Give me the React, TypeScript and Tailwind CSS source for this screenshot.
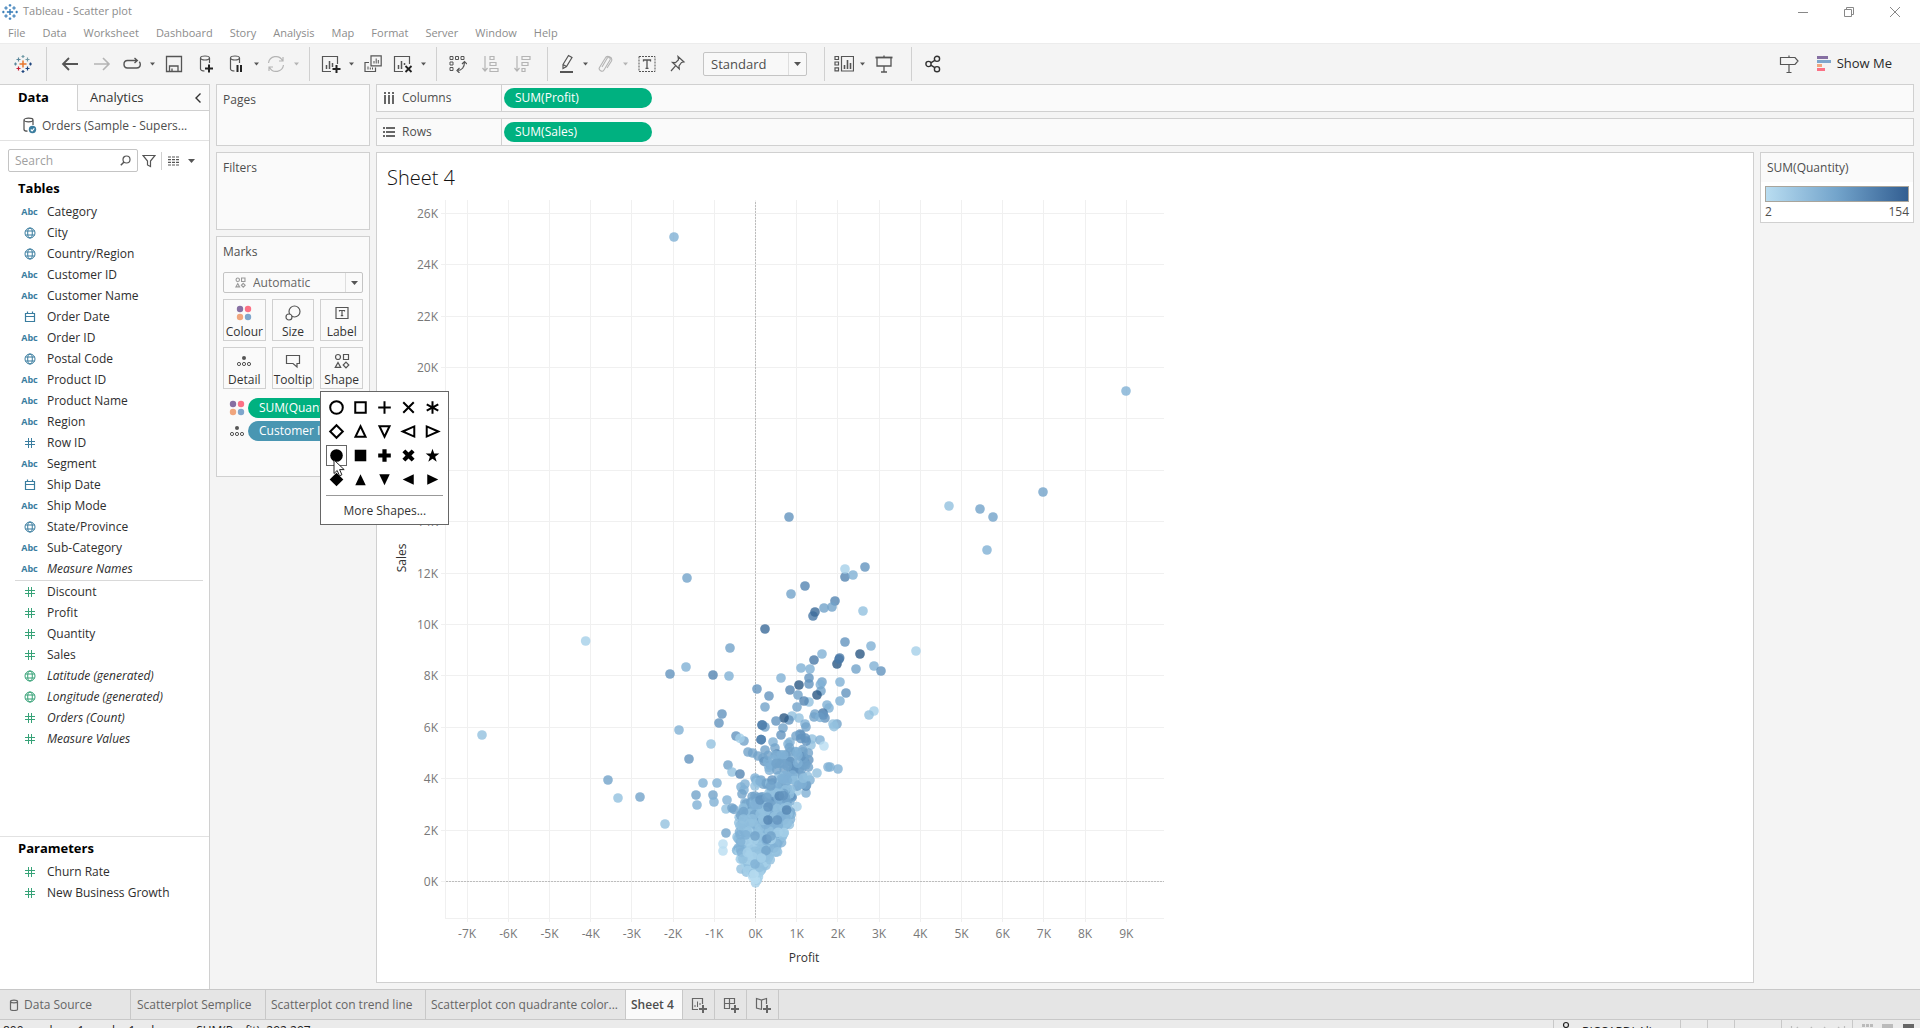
import type { ReactNode } from 'react';

type FieldKind = 'abc' | 'geo' | 'date' | 'num';
type Field = { name: string; kind: FieldKind; italic?: boolean };

const MENU = ['File', 'Data', 'Worksheet', 'Dashboard', 'Story', 'Analysis', 'Map', 'Format', 'Server', 'Window', 'Help'];

const DIMENSIONS: Field[] = [
  { name: 'Category', kind: 'abc' },
  { name: 'City', kind: 'geo' },
  { name: 'Country/Region', kind: 'geo' },
  { name: 'Customer ID', kind: 'abc' },
  { name: 'Customer Name', kind: 'abc' },
  { name: 'Order Date', kind: 'date' },
  { name: 'Order ID', kind: 'abc' },
  { name: 'Postal Code', kind: 'geo' },
  { name: 'Product ID', kind: 'abc' },
  { name: 'Product Name', kind: 'abc' },
  { name: 'Region', kind: 'abc' },
  { name: 'Row ID', kind: 'num' },
  { name: 'Segment', kind: 'abc' },
  { name: 'Ship Date', kind: 'date' },
  { name: 'Ship Mode', kind: 'abc' },
  { name: 'State/Province', kind: 'geo' },
  { name: 'Sub-Category', kind: 'abc' },
  { name: 'Measure Names', kind: 'abc', italic: true },
];

const MEASURES: Field[] = [
  { name: 'Discount', kind: 'num' },
  { name: 'Profit', kind: 'num' },
  { name: 'Quantity', kind: 'num' },
  { name: 'Sales', kind: 'num' },
  { name: 'Latitude (generated)', kind: 'geo', italic: true },
  { name: 'Longitude (generated)', kind: 'geo', italic: true },
  { name: 'Orders (Count)', kind: 'num', italic: true },
  { name: 'Measure Values', kind: 'num', italic: true },
];

const PARAMETERS: Field[] = [
  { name: 'Churn Rate', kind: 'num' },
  { name: 'New Business Growth', kind: 'num' },
];

/* ---------- icons ---------- */

function Svg({ w = 18, h = 18, children, className = '' }: { w?: number; h?: number; children: ReactNode; className?: string }) {
  return (
    <svg width={w} height={h} viewBox={`0 0 ${w} ${h}`} fill="none" stroke="currentColor" strokeWidth="1.2" className={`shrink-0 ${className}`} aria-hidden="true">
      {children}
    </svg>
  );
}

const Caret = ({ className = '' }: { className?: string }) => (
  <svg width="7" height="4" viewBox="0 0 7 4" fill="currentColor" className={className} aria-hidden="true">
    <path d="M0 0h7L3.500 4z" />
  </svg>
);

function Logo({ mono = false }: { mono?: boolean }) {
  const c = mono ? ['#2f77b5', '#2f77b5', '#2f77b5', '#2f77b5', '#2f77b5'] : ['#e8762c', '#c72037', '#5b879b', '#1f457e', '#7099a5'];
  return (
    <Svg className={mono ? 'size-4' : ''}>
      <path d="M9 5.500v7M5.500 9h7" stroke={c[0]} strokeWidth="1.500" />
      <path d="M4.500 2.500v4M2.500 4.500h4" stroke={c[2]} />
      <path d="M13.500 2.500v4M11.500 4.500h4" stroke={c[4]} />
      <path d="M4.500 11.500v4M2.500 13.500h4" stroke={c[1]} />
      <path d="M13.500 11.500v4M11.500 13.500h4" stroke={c[3]} />
      <path d="M9 0v3M7.500 1.500h3" stroke={c[4]} />
      <path d="M9 15v3M7.500 16.500h3" stroke={c[3]} />
      <path d="M1.500 7.500v3M0 9h3" stroke={c[2]} />
      <path d="M16.500 7.500v3M15 9h3" stroke={c[3]} />
    </Svg>
  );
}

const Globe = () => (
  <Svg w={12} h={12}>
    <circle cx="6" cy="6" r="5" strokeWidth="1" />
    <ellipse cx="6" cy="6" rx="2.300" ry="5" strokeWidth="1" />
    <path d="M1.500 4h9M1.500 8h9" strokeWidth="1" />
  </Svg>
);

const Calendar = () => (
  <Svg w={12} h={12}>
    <path d="M1.500 2.500h9v8h-9zM1.500 5.500h9M3.500 .5v2M8.500 .5v2" />
  </Svg>
);

const Hash = () => (
  <Svg w={12} h={12}>
    <path d="M4.500 1v10M7.500 1v10M1 4.500h10M1 7.500h10" strokeWidth="1" />
  </Svg>
);

const FourDots = () => (
  <svg width="16" height="16" viewBox="0 0 16 16" className="shrink-0" aria-hidden="true">
    <circle cx="4" cy="4" r="3.200" fill="#866fa2" />
    <circle cx="12" cy="4" r="3.200" fill="#fb7185" />
    <circle cx="4" cy="12" r="3.200" fill="#f0a67e" />
    <circle cx="12" cy="12" r="3.200" fill="#7ea6cc" />
  </svg>
);

const DetailIcon = () => (
  <Svg w={16} h={16} className="text-[#555]">
    <circle cx="8" cy="5" r="2" fill="currentColor" stroke="none" />
    <circle cx="3" cy="11" r="1.600" strokeWidth="1" />
    <circle cx="8" cy="11" r="1.600" strokeWidth="1" />
    <circle cx="13" cy="11" r="1.600" strokeWidth="1" />
  </Svg>
);

const ShapesIcon = () => (
  <Svg w={16} h={16}>
    <circle cx="4" cy="4" r="2.500" />
    <path d="M9.500 1.500h5v5h-5zM1.300 14.400L4 9.500l2.700 4.900zM12 9.200l2.800 2.800-2.800 2.800L9.200 12z" />
  </Svg>
);

const SizeIcon = () => (
  <Svg w={16} h={16}>
    <circle cx="9.500" cy="6.500" r="5.500" />
    <circle cx="4" cy="12" r="3" fill="#fafafa" />
  </Svg>
);

const LabelIcon = () => (
  <Svg w={16} h={16}>
    <path d="M2 2.500h12v11H2z" />
    <path d="M5.500 6.500v-1h5v1M8 5.500v5M6.800 10.700h2.400" />
  </Svg>
);

const TooltipIcon = () => (
  <Svg w={16} h={16}>
    <path d="M1.500 2.500h13v8h-2.500v3.500l-4-3.500H1.500z" />
  </Svg>
);

function Cylinder({ children }: { children?: ReactNode }) {
  return (
    <Svg w={18} h={20}>
      <path d="M3.500 4v11c0 1 2 2 4 2M12.500 4v5" />
      <ellipse cx="8" cy="4" rx="4.500" ry="2" />
      {children}
    </Svg>
  );
}

/* ---------- toolbar ---------- */

const TOOL_WIDTH = { sm: 'w-6', md: 'w-7', lg: 'w-8' };

function Tool({ label, size = 'md', dim, children }: { label: string; size?: 'sm' | 'md' | 'lg'; dim?: boolean; children: ReactNode }) {
  return (
    <button aria-label={label} className={`flex h-8 shrink-0 items-center justify-center ${TOOL_WIDTH[size]} ${dim ? 'text-[#b4b4b4]' : 'text-[#555]'}`}>
      {children}
    </button>
  );
}

function CaretTool({ label, dim }: { label: string; dim?: boolean }) {
  return (
    <button aria-label={label} className={`flex h-8 w-3 shrink-0 items-center justify-center ${dim ? 'text-[#b4b4b4]' : 'text-[#555]'}`}>
      <Caret className="w-[5px]" />
    </button>
  );
}

const Sep = () => <div className="mx-[7px] h-[34px] w-px shrink-0 bg-[#d0d0d0]" />;

function Toolbar() {
  return (
    <div className="flex h-[41px] shrink-0 items-center border-t border-[#ececec] bg-[#f4f4f4] pl-[7px]">
      <Tool label="Start page" size="lg"><Logo /></Tool>
      <Sep />
      <Tool label="Undo" size="lg"><Svg><path d="M17 9H2M8 3L2 9l6 6" strokeWidth="1.800" /></Svg></Tool>
      <Tool label="Redo" size="lg" dim><Svg><path d="M1 9h15M10 3l6 6-6 6" strokeWidth="1.600" /></Svg></Tool>
      <Tool label="Replay"><Svg><path d="M7 13H4.500C2.500 13 1 11.500 1 9.300S2.500 5.500 4.500 5.500H14M11.500 3l2.800 2.500L11.500 8M7 13h6.500c2.200 0 3.800-1.500 3.800-3.700 0-1-.4-1.900-1-2.600" strokeWidth="1.400" /></Svg></Tool>
      <CaretTool label="Replay options" />
      <Tool label="Save" size="lg"><Svg><path d="M1.500 1.500h15v15h-15zM4.500 16.500V11h8.500v5.500M7 16.500V13.500" strokeWidth="1.300" /></Svg></Tool>
      <Tool label="New data source" size="lg">
        <Cylinder><path d="M12 10.500v8M8 14.500h8" stroke="#222" strokeWidth="2" /></Cylinder>
      </Tool>
      <Tool label="Pause auto updates">
        <Cylinder><path d="M10.500 11v7M14 11v7" stroke="#222" strokeWidth="2" /></Cylinder>
      </Tool>
      <CaretTool label="Pause options" />
      <Tool label="Refresh" dim><Svg><path d="M1.500 8A7.500 7.500 0 0 1 15.500 5.500M16.500 10A7.500 7.500 0 0 1 2.500 12.500M16 2v4h-4M2 16v-4h4" /></Svg></Tool>
      <CaretTool label="Refresh options" dim />
      <Sep />
      <Tool label="New worksheet">
        <Svg w={20} h={18}>
          <path d="M10 16.500H1.500v-15h15V9" />
          <path d="M5.500 14V10M8.500 14V6M11.500 12V8" strokeWidth="1.500" />
          <path d="M15.500 10v8M11.500 14h8" stroke="#222" strokeWidth="2" />
        </Svg>
      </Tool>
      <CaretTool label="New options" />
      <Tool label="Duplicate" size="lg">
        <Svg>
          <path d="M7 .8h10.200v10H7zM5 7.500H1v9h10.500v-4" />
          <path d="M10 8.500V6M12.200 8.500V3.500M14.300 8.500V5M4 14.500v-3M6.300 14.500v-2M8.500 14.500v-2" strokeWidth="1" />
        </Svg>
      </Tool>
      <Tool label="Clear sheet">
        <Svg w={20} h={18}>
          <path d="M10 16.500H1.500v-15h15V9" />
          <path d="M5.500 14V10M8.500 14V6M11.500 10V8" strokeWidth="1.500" />
          <path d="M12.500 11l6 6M18.500 11l-6 6" stroke="#222" strokeWidth="1.800" />
        </Svg>
      </Tool>
      <CaretTool label="Clear options" />
      <Sep />
      <Tool label="Swap rows and columns" size="md">
        <Svg>
          <path d="M1 1.500h3v3H1zM6.500 1.500h3v3h-3zM12 1.500h3v3h-3zM1 7h3v3H1zM1 12.500h3v3H1z" strokeWidth="1" />
          <path d="M15.500 7c0 5-2.500 8.500-7.500 8.500M13 9l2.500-2.500L18 9M10.500 13L8 15.500l2.500 2.500" />
        </Svg>
      </Tool>
      <div className="w-0.5" />
      <Tool label="Sort ascending" size="lg" dim><Svg><path d="M4 1v15M1.500 13L4 16l2.500-3M9 1.500h4v3H9zM9 7.500h6v3H9zM9 13.500h8v3H9z" /></Svg></Tool>
      <Tool label="Sort descending" size="lg" dim><Svg><path d="M4 1v15M1.500 13L4 16l2.500-3M9 1.500h8v3H9zM9 7.500h6v3H9zM9 13.500h3v3H9z" /></Svg></Tool>
      <div className="w-0.5" />
      <Sep />
      <Tool label="Highlight" size="sm">
        <Svg w={16} h={20}>
          <path d="M4 10.500L9.500 1.500l3.500 2-5.500 9L4 14.500zM4 10.500l3.500 2" />
          <path d="M1 18h13" strokeWidth="2" />
        </Svg>
      </Tool>
      <CaretTool label="Highlight options" />
      <Tool label="Group members" dim><Svg><path d="M6 12l5-8.500c1.300-2 4-.5 3 1.500L8 15c-1.600 2.600-6 .3-4.500-2.500L9 3.500C11-.5 17 2 15.500 6L11 13" strokeWidth="1.100" /></Svg></Tool>
      <CaretTool label="Group options" dim />
      <Tool label="Show mark labels" size="lg">
        <Svg>
          <path d="M1 1.500h16v15H1z" strokeDasharray="2 1" strokeWidth="1" />
          <path d="M5.500 6.500V5h7v1.500M9 5v8M7.500 13.300h3" strokeWidth="1.300" />
        </Svg>
      </Tool>
      <Tool label="Fix axes"><Svg><path d="M10 1.500l6 5.500-2.500.5-2.500 3.500.3 3L4.500 7.500l3 .2 3-3zM7.500 10.800L3 16" /></Svg></Tool>
      <div className="relative mr-2.5 ml-3 w-[104px] shrink-0">
        <select aria-label="Fit" className="block h-6 w-full appearance-none rounded-xs border border-[#c4c4c4] bg-[#f8f8f8] pl-[7px] text-[13px] leading-5 text-[#4e4e4e]">
          <option>Standard</option>
          <option>Entire View</option>
        </select>
        <div className="pointer-events-none absolute inset-y-px right-px flex w-[18px] items-center justify-center border-l border-[#dedede] text-[#555]">
          <Caret />
        </div>
      </div>
      <Sep />
      <Tool label="Show cards" size="sm">
        <Svg w={20} h={18}>
          <path d="M7.500 1.500h12v14.500h-12zM1 1.500h3.500v3H1zM1 7h3.500v3H1zM1 12.800h3.500v3H1z" />
          <path d="M10.500 14v-4M13.500 14V5M16.500 14V8" strokeWidth="1.600" />
        </Svg>
      </Tool>
      <CaretTool label="Card options" />
      <Tool label="Presentation mode" size="lg">
        <Svg><path d="M.5 2.500h17" strokeWidth="1.800" /><path d="M2 2.500v8.500h14V2.500M9 .5V2M9 11v6M6 17h6" strokeWidth="1.300" /></Svg>
      </Tool>
      <div className="w-1" />
      <Sep />
      <Tool label="Share">
        <Svg w={16} h={18} className="text-[#333]">
          <circle cx="3.500" cy="9" r="2.600" strokeWidth="1.400" />
          <circle cx="12" cy="3.800" r="2.600" strokeWidth="1.400" />
          <circle cx="12" cy="14.200" r="2.600" strokeWidth="1.400" />
          <path d="M5.800 7.800l4-2.500M5.800 10.200l4 2.500" strokeWidth="1.400" />
        </Svg>
      </Tool>
      <div className="ml-auto flex items-center pr-7">
        <Tool label="Data guide">
          <Svg w={20} h={18}><path d="M1.500 2.500h14.500l3 3.500-3 3.500H1.500zM10 .5v2M10 9.500v8M7.500 17.500h5" /></Svg>
        </Tool>
        <button className="ml-3.5 flex items-center gap-1.5 text-[13px] text-[#2a2a2a]">
          <svg width="14" height="16" viewBox="0 0 14 16" aria-hidden="true">
            <path d="M0 0h11v3H0z" fill="#866fa2" />
            <path d="M0 4h14v3H0z" fill="#7ea6cc" />
            <path d="M0 8h5v3H0z" fill="#f0a67e" />
            <path d="M0 12h8v3H0z" fill="#fb7185" />
          </svg>
          Show Me
        </button>
      </div>
    </div>
  );
}

/* ---------- data pane ---------- */

function FieldRow({ field, tone }: { field: Field; tone: string }) {
  return (
    <li className="flex h-[21px] items-center">
      <span className={`flex w-[17px] justify-center ${tone}`}>
        {field.kind === 'abc' && <span className="text-[9px] font-bold">Abc</span>}
        {field.kind === 'geo' && <Globe />}
        {field.kind === 'date' && <Calendar />}
        {field.kind === 'num' && <Hash />}
      </span>
      <span className={`ml-[9px] ${field.italic ? 'italic' : ''}`}>{field.name}</span>
    </li>
  );
}

function DataPane() {
  return (
    <aside className="flex w-[210px] shrink-0 flex-col border-t border-r border-[#d0d0d0] bg-white text-xs text-[#2e2e2e]">
      <div className="flex h-[26px] shrink-0">
        <button className="w-[77px] pl-[18px] text-left text-[13px] font-bold text-black">Data</button>
        <button className="flex flex-1 items-center justify-between border-b border-l border-[#d0d0d0] bg-[#fafafa] pr-[7px] pl-3 text-[13px] text-[#333]">
          Analytics
          <Svg w={8} h={10}><path d="M6.500 .5L2 5l4.500 4.500" strokeWidth="1.400" /></Svg>
        </button>
      </div>
      <div className="flex h-[30px] shrink-0 items-center border-b border-[#e2e2e2] pl-[22px] text-[#4e4e4e]">
        <Svg w={16} h={18}>
          <path d="M2 3.500v9c0 1 1.500 1.700 3.500 1.700M11 3.500V8" />
          <ellipse cx="6.500" cy="3" rx="4.500" ry="1.800" />
          <circle cx="10.500" cy="12.500" r="3.700" fill="#3a7d9f" stroke="none" />
          <path d="M8.800 12.500l1.300 1.300 2.200-2.400" stroke="#fff" />
        </Svg>
        <span className="ml-1 truncate">Orders (Sample - Supers...</span>
      </div>
      <div className="mt-2 ml-2 flex shrink-0 items-center text-[#555]">
        <label className="flex h-[23px] w-[130px] items-center rounded-xs border border-[#c4c4c4] pr-1.5 pl-1.5">
          <input aria-label="Search fields" placeholder="Search" className="w-full min-w-0 outline-none placeholder:text-[#a0a0a0]" />
          <Svg w={11} h={11}><circle cx="6.500" cy="4.500" r="3.500" /><path d="M4 7L.8 10.200" strokeWidth="1.500" /></Svg>
        </label>
        <button aria-label="Filter fields" className="ml-1">
          <Svg w={14} h={14}><path d="M1 1.500h12L8.500 7v5.500l-3-1.500V7z" /></Svg>
        </button>
        <div className="ml-[5px] h-[18px] w-px bg-[#d0d0d0]" />
        <button aria-label="View options" className="ml-1.5 flex items-center gap-2">
          <Svg w={12} h={10}><path d="M0 1h12M0 3.600h12M0 6.300h12M0 9h12" strokeDasharray="3 1" /></Svg>
          <Caret />
        </button>
      </div>
      <h2 className="mt-[7px] pl-[18px] text-[13px] leading-[18px] font-bold text-black">Tables</h2>
      <ul className="mt-1 pl-[21px]">
        {DIMENSIONS.map((f) => <FieldRow key={f.name} field={f} tone="text-[#3a7d9f]" />)}
      </ul>
      <div className="mt-px mr-1.5 ml-[15px] h-px bg-[#d9d9d9]" />
      <ul className="pl-[21px]">
        {MEASURES.map((f) => <FieldRow key={f.name} field={f} tone="text-[#36a277]" />)}
      </ul>
      <div className="mt-auto h-[153px] shrink-0 border-t border-[#e2e2e2]">
        <h2 className="mt-0.5 pl-[18px] text-[13px] leading-[18px] font-bold text-black">Parameters</h2>
        <ul className="mt-1 pl-[21px]">
          {PARAMETERS.map((f) => <FieldRow key={f.name} field={f} tone="text-[#36a277]" />)}
        </ul>
      </div>
    </aside>
  );
}

/* ---------- cards ---------- */

const SHAPES: { name: string; d: string; solid?: boolean }[] = [
  { name: 'Circle', d: 'M10 4a6 6 0 1 1 0 12a6 6 0 1 1 0-12z' },
  { name: 'Square', d: 'M5 5h10v10H5z' },
  { name: 'Plus', d: 'M10 4v12M4 10h12' },
  { name: 'Times', d: 'M5 5l10 10M15 5L5 15' },
  { name: 'Asterisk', d: 'M10 4v12M4.500 7l11 6M15.500 7l-11 6' },
  { name: 'Diamond', d: 'M10 4l6 6-6 6-6-6z' },
  { name: 'Triangle', d: 'M10 5l4.800 10H5.200z' },
  { name: 'Down triangle', d: 'M10 15l4.800-10H5.200z' },
  { name: 'Left triangle', d: 'M4.500 10l11-4.800v9.600z' },
  { name: 'Right triangle', d: 'M15.500 10l-11-4.800v9.600z' },
  { name: 'Filled circle', solid: true, d: 'M10 4a6 6 0 1 1 0 12a6 6 0 1 1 0-12z' },
  { name: 'Filled square', solid: true, d: 'M4.500 4.500h11v11h-11z' },
  { name: 'Filled plus', solid: true, d: 'M8 4h4v4h4v4h-4v4H8v-4H4V8h4z' },
  { name: 'Filled times', solid: true, d: 'M7 4.200l3 3 3-3L15.800 7l-3 3 3 3-2.800 2.800-3-3-3 3L4.200 13l3-3-3-3z' },
  { name: 'Star', solid: true, d: 'M10 3.500l1.600 4.700h4.900l-4 3 1.500 4.800-4-3-4 3 1.500-4.800-4-3h4.900z' },
  { name: 'Filled diamond', solid: true, d: 'M10 3.500l6.500 6.500-6.500 6.500L3.500 10z' },
  { name: 'Filled triangle', solid: true, d: 'M10 5l5 10.500H5z' },
  { name: 'Filled down triangle', solid: true, d: 'M10 15.500L15 5H5z' },
  { name: 'Filled left triangle', solid: true, d: 'M4.500 10L15 5v10z' },
  { name: 'Filled right triangle', solid: true, d: 'M15.500 10L5 5v10z' },
];

function ShapeMenu() {
  return (
    <div className="absolute top-11 left-0 z-10 w-[129px] border border-[#666] bg-white px-[5px] pt-[5px] pb-1">
      <div className="grid grid-cols-[repeat(5,21px)] gap-[3px]">
        {SHAPES.map((s) => (
          <button key={s.name} aria-label={s.name} className={`flex size-[21px] items-center justify-center border ${s.name === 'Filled circle' ? 'border-[#666]' : 'border-transparent'}`}>
            <svg width="21" height="21" viewBox="0 0 20 20" fill={s.solid ? '#000' : 'none'} stroke={s.solid ? 'none' : '#000'} strokeWidth="1.900" className="shrink-0" aria-hidden="true">
              <path d={s.d} />
            </svg>
          </button>
        ))}
      </div>
      <div className="mt-[5px] h-px bg-[#999]" />
      <button className="mt-[5px] w-full text-xs leading-[19px] text-[#333]">More Shapes...</button>
      <svg width="13" height="18" viewBox="0 0 13 18" className="pointer-events-none absolute top-[67px] left-3" aria-hidden="true">
        <path d="M1 1v13.500l3.200-3 2.300 5.300 2.400-1-2.300-5.200h4.600z" fill="#fff" stroke="#222" />
      </svg>
    </div>
  );
}

function MarkButton({ label, icon }: { label: string; icon: ReactNode }) {
  return (
    <button className="flex h-[42px] w-full flex-col items-center justify-between border border-[#d0d0d0] bg-[#fafafa] pt-[5px] text-xs leading-4 text-[#333]">
      <span className="text-[#555]">{icon}</span>
      {label}
    </button>
  );
}

function Cards() {
  const card = 'border border-[#d0d0d0] bg-[#fafafa] px-1.5 pt-[7px]';
  return (
    <div className="ml-1.5 flex w-[154px] shrink-0 flex-col gap-1.5 text-xs text-[#4e4e4e]">
      <section className={`h-[62px] ${card}`}>Pages</section>
      <section className={`h-[78px] ${card}`}>Filters</section>
      <section className={`h-[241px] ${card}`}>
        Marks
        <div className="relative mt-3">
          <select aria-label="Mark type" className="block h-[21px] w-full appearance-none rounded-xs border border-[#c4c4c4] bg-[#fafafa] pl-[29px] text-[#666]">
            <option>Automatic</option>
            <option>Shape</option>
          </select>
          <svg width="11" height="11" viewBox="0 0 16 16" fill="none" stroke="#999" strokeWidth="1.600" className="pointer-events-none absolute top-[5px] left-3" aria-hidden="true">
            <circle cx="4" cy="4" r="2.500" />
            <path d="M9.500 1.500h5v5h-5zM1.300 14.400L4 9.500l2.700 4.900zM12 9.200l2.800 2.800-2.800 2.800L9.200 12z" />
          </svg>
          <div className="pointer-events-none absolute inset-y-px right-px flex w-[17px] items-center justify-center border-l border-[#dedede] text-[#555]">
            <Caret />
          </div>
        </div>
        <div className="mt-1.5 grid grid-cols-3 gap-1.5">
          <MarkButton label="Colour" icon={<FourDots />} />
          <MarkButton label="Size" icon={<SizeIcon />} />
          <MarkButton label="Label" icon={<LabelIcon />} />
          <MarkButton label="Detail" icon={<DetailIcon />} />
          <MarkButton label="Tooltip" icon={<TooltipIcon />} />
          <div className="relative">
            <MarkButton label="Shape" icon={<ShapesIcon />} />
            <ShapeMenu />
          </div>
        </div>
        <div className="mt-[9px] flex flex-col gap-[3px] pl-1.5 text-white">
          <div className="flex items-center gap-[3px]">
            <FourDots />
            <button className="h-5 flex-1 overflow-hidden rounded-full bg-[#00b180] pl-[11px] text-left whitespace-nowrap">SUM(Quantity)</button>
          </div>
          <div className="flex items-center gap-[3px]">
            <DetailIcon />
            <button className="h-5 flex-1 overflow-hidden rounded-full bg-[#4996b2] pl-[11px] text-left whitespace-nowrap">Customer ID</button>
          </div>
        </div>
      </section>
    </div>
  );
}

/* ---------- view ---------- */

const BLUES = ['#b9ddf1', '#a5cfe9', '#92c0df', '#80b0d5', '#72a3c9', '#6394be', '#5485b2', '#4878a6', '#3b6a98', '#2a5783'];

// x, y (thirds of a pixel) and shade index for each customer outside the dense core
const MARKS: number[][] = [
  [741, 144, 4], [437, 333, 1], [126, 615, 2], [504, 750, 4], [534, 804, 2], [600, 801, 4], [675, 882, 2],
  [717, 600, 3], [747, 687, 5], [690, 432, 5], [738, 411, 3], [819, 435, 6], [867, 438, 3], [870, 354, 4],
  [846, 552, 5], [837, 579, 5], [813, 642, 2], [789, 759, 3], [831, 759, 3], [768, 795, 4], [771, 825, 3],
  [819, 795, 4], [822, 816, 3], [861, 810, 3], [858, 837, 2], [864, 705, 4], [876, 726, 2], [900, 732, 6],
  [858, 909, 4], [849, 942, 0], [849, 963, 0], [888, 618, 5], [912, 633, 4], [900, 625, 1], [924, 666, 4],
  [938, 669, 4], [951, 477, 5], [987, 498, 5], [975, 531, 4], [975, 297, 8], [1053, 192, 4], [1095, 168, 6],
  [1215, 141, 6], [1215, 117, 1], [1239, 135, 3], [1275, 111, 5], [1185, 213, 6], [1176, 231, 4], [1152, 234, 4],
  [1119, 258, 7], [1125, 246, 8], [1269, 243, 2], [1215, 336, 5], [1293, 348, 3], [1260, 372, 9], [1428, 363, 1],
  [1302, 408, 3], [1323, 423, 5], [1248, 417, 4], [1191, 402, 9], [1197, 388, 7], [1199, 384, 7], [1146, 372, 3],
  [1122, 390, 7], [1083, 414, 3], [1110, 417, 3], [1023, 444, 3], [1107, 444, 5], [1107, 462, 5], [1077, 465, 9],
  [1050, 480, 6], [1074, 495, 4], [1146, 456, 4], [1141, 464, 3], [1143, 483, 4], [1131, 495, 9], [1107, 516, 2],
  [1092, 513, 6], [1071, 531, 4], [1200, 456, 3], [1218, 489, 5], [1200, 513, 3], [1161, 525, 3], [1167, 534, 3],
  [1302, 543, 1], [1287, 555, 2], [1191, 582, 4], [1179, 582, 2], [1182, 590, 2], [1125, 552, 4], [1122, 561, 4],
  [1149, 549, 7], [1155, 564, 5], [1140, 562, 3], [1150, 555, 5], [1056, 558, 2], [1077, 564, 2], [1047, 570, 5],
  [1032, 564, 9], [1008, 573, 5], [1029, 594, 4], [975, 591, 4], [966, 585, 8], [967, 585, 6], [963, 629, 8],
  [964, 629, 6], [1023, 615, 5], [999, 636, 3], [975, 660, 4], [1095, 582, 3], [1098, 591, 4], [1080, 612, 5],
  [1083, 615, 5], [1068, 618, 4], [1116, 627, 2], [1140, 630, 3], [1152, 648, 0], [1113, 645, 2], [1050, 636, 3],
  [1044, 642, 3], [1005, 654, 4], [1011, 672, 6], [1026, 684, 5], [1038, 675, 6], [954, 678, 4], [969, 684, 4],
  [990, 705, 6], [1164, 711, 3], [1170, 711, 3], [1194, 717, 3], [1131, 729, 2], [1098, 789, 3], [1098, 768, 6],
  [1110, 750, 3], [1089, 705, 6], [1071, 830, 1], [1056, 801, 6], [915, 762, 3], [903, 771, 3], [912, 780, 3],
  [906, 792, 4], [945, 744, 3], [948, 750, 3], [963, 750, 4], [945, 768, 2], [1071, 783, 1], [876, 834, 4], [882, 838, 4],
  [903, 1017, 2],
];

// row centre, left, right, count, lightest and darkest shade
const CORE: number[][] = [
  [635, 1080, 1105, 3, 3, 5], [660, 1040, 1108, 7, 3, 4], [685, 965, 1112, 16, 3, 5], [710, 980, 1112, 18, 3, 5],
  [735, 1010, 1106, 11, 2, 4], [758, 950, 1105, 20, 2, 4], [785, 985, 1055, 22, 2, 4], [808, 930, 1058, 34, 3, 5],
  [828, 908, 1045, 44, 2, 4], [852, 897, 1055, 52, 2, 4], [876, 896, 1052, 54, 2, 3], [905, 898, 1035, 52, 1, 3],
  [930, 890, 1028, 48, 1, 3], [958, 888, 1014, 50, 1, 3], [982, 900, 992, 38, 1, 2], [1005, 915, 980, 24, 1, 2],
  [1025, 918, 968, 14, 1, 2], [1042, 934, 956, 8, 0, 1], [1048, 944, 949, 3, 0, 1],
];

function coreMarks() {
  let seed = 20;
  const rnd = () => {
    seed = (seed * 1103515245 + 12345) % 2147483648;
    return seed / 2147483648;
  };
  return CORE.flatMap(([cy, left, right, count, lo, hi]) =>
    Array.from({ length: count }, (_, i) => [
      left + ((i + rnd()) / count) * (right - left),
      cy + (rnd() - 0.5) * 22,
      lo + Math.floor(rnd() * (hi - lo + 1)),
      rnd(),
    ]),
  ).sort((a, b) => a[3] - b[3]);
}

// drawn last, over the core
const TOP_MARKS: number[][] = [
  [960, 810, 5], [981, 802, 4], [1018, 798, 6], [1030, 797, 5], [984, 831, 5], [1040, 840, 6], [1012, 870, 5],
  [984, 870, 6], [945, 918, 4], [981, 927, 5], [993, 918, 4], [978, 962, 4], [945, 1002, 3], [964, 984, 1],
  [922, 968, 1], [1042, 880, 2], [930, 880, 2], [996, 750, 5], [992, 768, 4],
];

const x = (v: number) => 370.5 + v * 41.2;
const y = (v: number) => 685.5 - v * 25.7;

function Scatter() {
  const xs = Array.from({ length: 17 }, (_, i) => i - 7);
  const ys = Array.from({ length: 14 }, (_, i) => i * 2);
  const all = [...MARKS, ...coreMarks(), ...TOP_MARKS];
  return (
    <svg width="790" height="780" viewBox="0 0 790 780" role="img" aria-label="Sales by Profit" className="text-xs">
      <g stroke="#f0f0f0" shapeRendering="crispEdges">
        <path d="M60.500 4v718M60 722.500h719" />
        {xs.map((v) => <path key={v} d={`M${Math.floor(x(v)) + 0.5} 4v722`} />)}
        {ys.map((v) => <path key={v} d={`M56 ${Math.floor(y(v)) + 0.5}h723`} />)}
      </g>
      <path d="M370.500 6v716M61 685.500h718" stroke="#bdbdbd" strokeDasharray="2 1" shapeRendering="crispEdges" />
      <g fill="#787878">
        {ys.map((v) => <text key={v} x="53" y={Math.floor(y(v)) + 5} textAnchor="end">{v}K</text>)}
        {xs.map((v) => <text key={v} x={x(v)} y="742" textAnchor="middle">{v}K</text>)}
      </g>
      <g fill="#333">
        <text x="419" y="766" textAnchor="middle">Profit</text>
        <text transform="translate(21 362) rotate(-90)" textAnchor="middle">Sales</text>
      </g>
      <g fillOpacity="0.8">
        {/* the largest accounts, far from the core */}
        <circle cx="289" cy="41" r="4.800" fill={BLUES[3]} />
        <circle cx="741" cy="195" r="4.800" fill={BLUES[3]} />
        <circle cx="658" cy="296" r="4.800" fill={BLUES[4]} />
        <circle cx="564" cy="310" r="4.800" fill={BLUES[2]} />
        <circle cx="595" cy="313" r="4.800" fill={BLUES[4]} />
        <circle cx="608" cy="321" r="4.800" fill={BLUES[4]} />
        <circle cx="404" cy="321" r="4.800" fill={BLUES[5]} />
        <circle cx="602" cy="354" r="4.800" fill={BLUES[3]} />
        <g transform="translate(55 334) scale(0.33333)">
          {all.map(([cx, cy, shade], i) => <circle key={i} cx={cx} cy={cy} r="14.500" fill={BLUES[shade]} />)}
        </g>
      </g>
    </svg>
  );
}

function Shelf({ label, pill, icon }: { label: string; pill: string; icon: ReactNode }) {
  return (
    <div className="flex h-7 shrink-0 border border-[#d0d0d0] bg-[#fafafa]">
      <div className="flex w-[125px] items-center gap-[7px] border-r border-[#d0d0d0] pl-1.5 text-xs text-[#4e4e4e]">
        {icon}
        {label}
      </div>
      <button className="mt-[3px] ml-0.5 h-5 w-[148px] rounded-full bg-[#00b180] pl-[11px] text-left text-xs text-white">{pill}</button>
    </div>
  );
}

function Workspace() {
  return (
    <main className="mr-1.5 ml-1.5 flex min-w-0 flex-1 flex-col gap-1.5 pb-1.5">
      <Shelf label="Columns" pill="SUM(Profit)" icon={<Svg w={12} h={12}><path d="M2 0v2M2 3v9M6 0v2M6 3v9M10 0v2M10 3v9" strokeWidth="2" stroke="#666" /></Svg>} />
      <Shelf label="Rows" pill="SUM(Sales)" icon={<Svg w={12} h={12}><path d="M0 2h2M3 2h9M0 6h2M3 6h9M0 10h2M3 10h9" strokeWidth="2" stroke="#666" /></Svg>} />
      <div className="flex min-h-0 flex-1 gap-1.5">
        <section className="min-w-0 flex-1 overflow-hidden border border-[#d0d0d0] bg-white pl-2">
          <h1 className="h-[43px] pt-3 pl-0.5 text-xl leading-[26px] font-light text-[#111]">Sheet 4</h1>
          <Scatter />
        </section>
        <aside className="w-[154px] shrink-0 text-xs text-[#4e4e4e]">
          <div className="border border-[#d0d0d0] bg-white">
            <h2 className="h-[29px] bg-[#fafafa] pt-[7px] pl-1.5">SUM(Quantity)</h2>
            <div className="mx-1 mt-1 h-4 border border-[#a9a59c] bg-linear-to-r from-[#b9ddf1] via-[#73a4cb] to-[#335f92]" />
            <div className="flex justify-between px-1 pt-0.5 pb-0.5 leading-4">
              <span>2</span>
              <span>154</span>
            </div>
          </div>
        </aside>
      </div>
    </main>
  );
}

/* ---------- bottom bars ---------- */

function SheetTabs() {
  const tab = 'h-full shrink-0 border-r border-[#c8c8c8] text-left truncate';
  return (
    <nav className="flex h-[31px] shrink-0 items-stretch border-t border-b border-[#c8c8c8] bg-[#e5e5e5] text-xs text-[#666]">
      <button className={`flex w-[131px] items-center gap-[5px] pl-[9px] ${tab}`}>
        <Svg w={10} h={12}><path d="M1.500 2.500v8c0 .6 1.500 1 3.500 1s3.500-.4 3.500-1v-8c0-1.800-7-1.800-7 0s7 1.800 7 0" /></Svg>
        Data Source
      </button>
      <button className={`w-[135px] px-1.5 ${tab}`}>Scatterplot Semplice</button>
      <button className={`w-40 px-[5px] ${tab}`}>Scatterplot con trend line</button>
      <button className={`w-[200px] px-[5px] ${tab}`}>Scatterplot con quadrante color...</button>
      <button className={`w-[57px] bg-[#fafafa] px-[5px] font-semibold text-[#4e4e4e] ${tab}`}>Sheet 4</button>
      <button aria-label="New worksheet tab" className={`flex w-8 items-center justify-center ${tab}`}>
        <Svg w={16} h={16}>
          <path d="M7 12.500H1.500v-11h10V7" />
          <path d="M4 10V8M6.500 10V4.500M9 8V6" strokeWidth="1" />
          <path d="M12 8v8M8 12h8" strokeWidth="2" />
        </Svg>
      </button>
      <button aria-label="New dashboard" className={`flex w-8 items-center justify-center ${tab}`}>
        <Svg w={16} h={16}>
          <path d="M7 11.500H1.500v-10h10V7M6.500 1.500v10M1.500 6.500h10" />
          <path d="M12 8v8M8 12h8" strokeWidth="2" />
        </Svg>
      </button>
      <button aria-label="New story" className={`flex w-8 items-center justify-center ${tab}`}>
        <Svg w={16} h={16}>
          <path d="M7 12.500L1.500 11V1.500L6.500 3l5-1.500V7M6.500 3v9" />
          <path d="M12 8v8M8 12h8" strokeWidth="2" />
        </Svg>
      </button>
    </nav>
  );
}

function StatusBar() {
  return (
    <footer className="flex h-2 shrink-0 overflow-hidden bg-[#ebebeb] text-xs text-[#222]">
      <div className="flex gap-4 pt-[3px] pl-[3px] leading-4 whitespace-nowrap">
        <span>800 marks</span>
        <span>1 row by 1 column</span>
        <span>SUM(Profit): 292,297</span>
      </div>
      <div className="ml-auto flex h-6 whitespace-nowrap">
        <div className="flex w-[127px] gap-3 border-l border-[#c8c8c8] pl-2">
          <Svg w={8} h={16}><circle cx="4" cy="5" r="2.500" /><path d="M.5 14V9.500h7V14" /></Svg>
          <span className="pt-1 leading-4">RICCARDI Ali</span>
        </div>
        <div className="w-[27px] border-l border-[#c8c8c8]" />
        <div className="w-[27px] border-l border-[#c8c8c8]" />
        <div className="w-[47px] border-l border-[#c8c8c8]" />
        <div className="w-[71px] border-l border-[#c8c8c8] pt-1.5 pl-2 text-[#bbb]">
          <Svg w={56} h={12}><path d="M1.500 0v10M8 1L4 5l4 4M22 1l-4 4 4 4M34 1l4 4-4 4M48 1l4 4-4 4M54.500 0v10" /></Svg>
        </div>
        <div className="w-[68px] border-l border-[#c8c8c8] pt-1 pl-2">
          <Svg w={54} h={12}>
            <path d="M1 1.500h11M1 5.500h11" stroke="#bbb" strokeWidth="3" strokeDasharray="3 1" />
            <path d="M21 0h11v10H21z" fill="#bbb" stroke="none" />
            <path d="M42 0h11v10H42z" fill="#666" stroke="none" />
          </Svg>
        </div>
      </div>
    </footer>
  );
}

export default function App() {
  return (
    <div className="flex h-screen flex-col overflow-hidden bg-[#f4f4f4] font-['Open_Sans',sans-serif]">
      <header className="h-[43px] shrink-0 bg-white text-[11px] text-[#8c8c8c]">
        <div className="flex h-[23px] items-center gap-[5px] pl-0.5">
          <Logo mono />
          <span>Tableau - Scatter plot</span>
          <div className="ml-auto flex gap-9 pr-5 text-[#888]">
            <button aria-label="Minimise"><Svg w={10} h={10}><path d="M0 5.500h10" strokeWidth="1" /></Svg></button>
            <button aria-label="Restore"><Svg w={10} h={10}><path d="M.5 2.500h7v7h-7zM2.500 2.500v-2h7v7h-2" strokeWidth="1" /></Svg></button>
            <button aria-label="Close"><Svg w={10} h={10}><path d="M0 0l10 10M10 0L0 10" strokeWidth="1" /></Svg></button>
          </div>
        </div>
        <nav className="flex h-[21px] items-center gap-[17px] pl-2">
          {MENU.map((m) => <button key={m}>{m}</button>)}
        </nav>
      </header>
      <Toolbar />
      <div className="flex min-h-0 flex-1">
        <DataPane />
        <Cards />
        <Workspace />
      </div>
      <SheetTabs />
      <StatusBar />
    </div>
  );
}
